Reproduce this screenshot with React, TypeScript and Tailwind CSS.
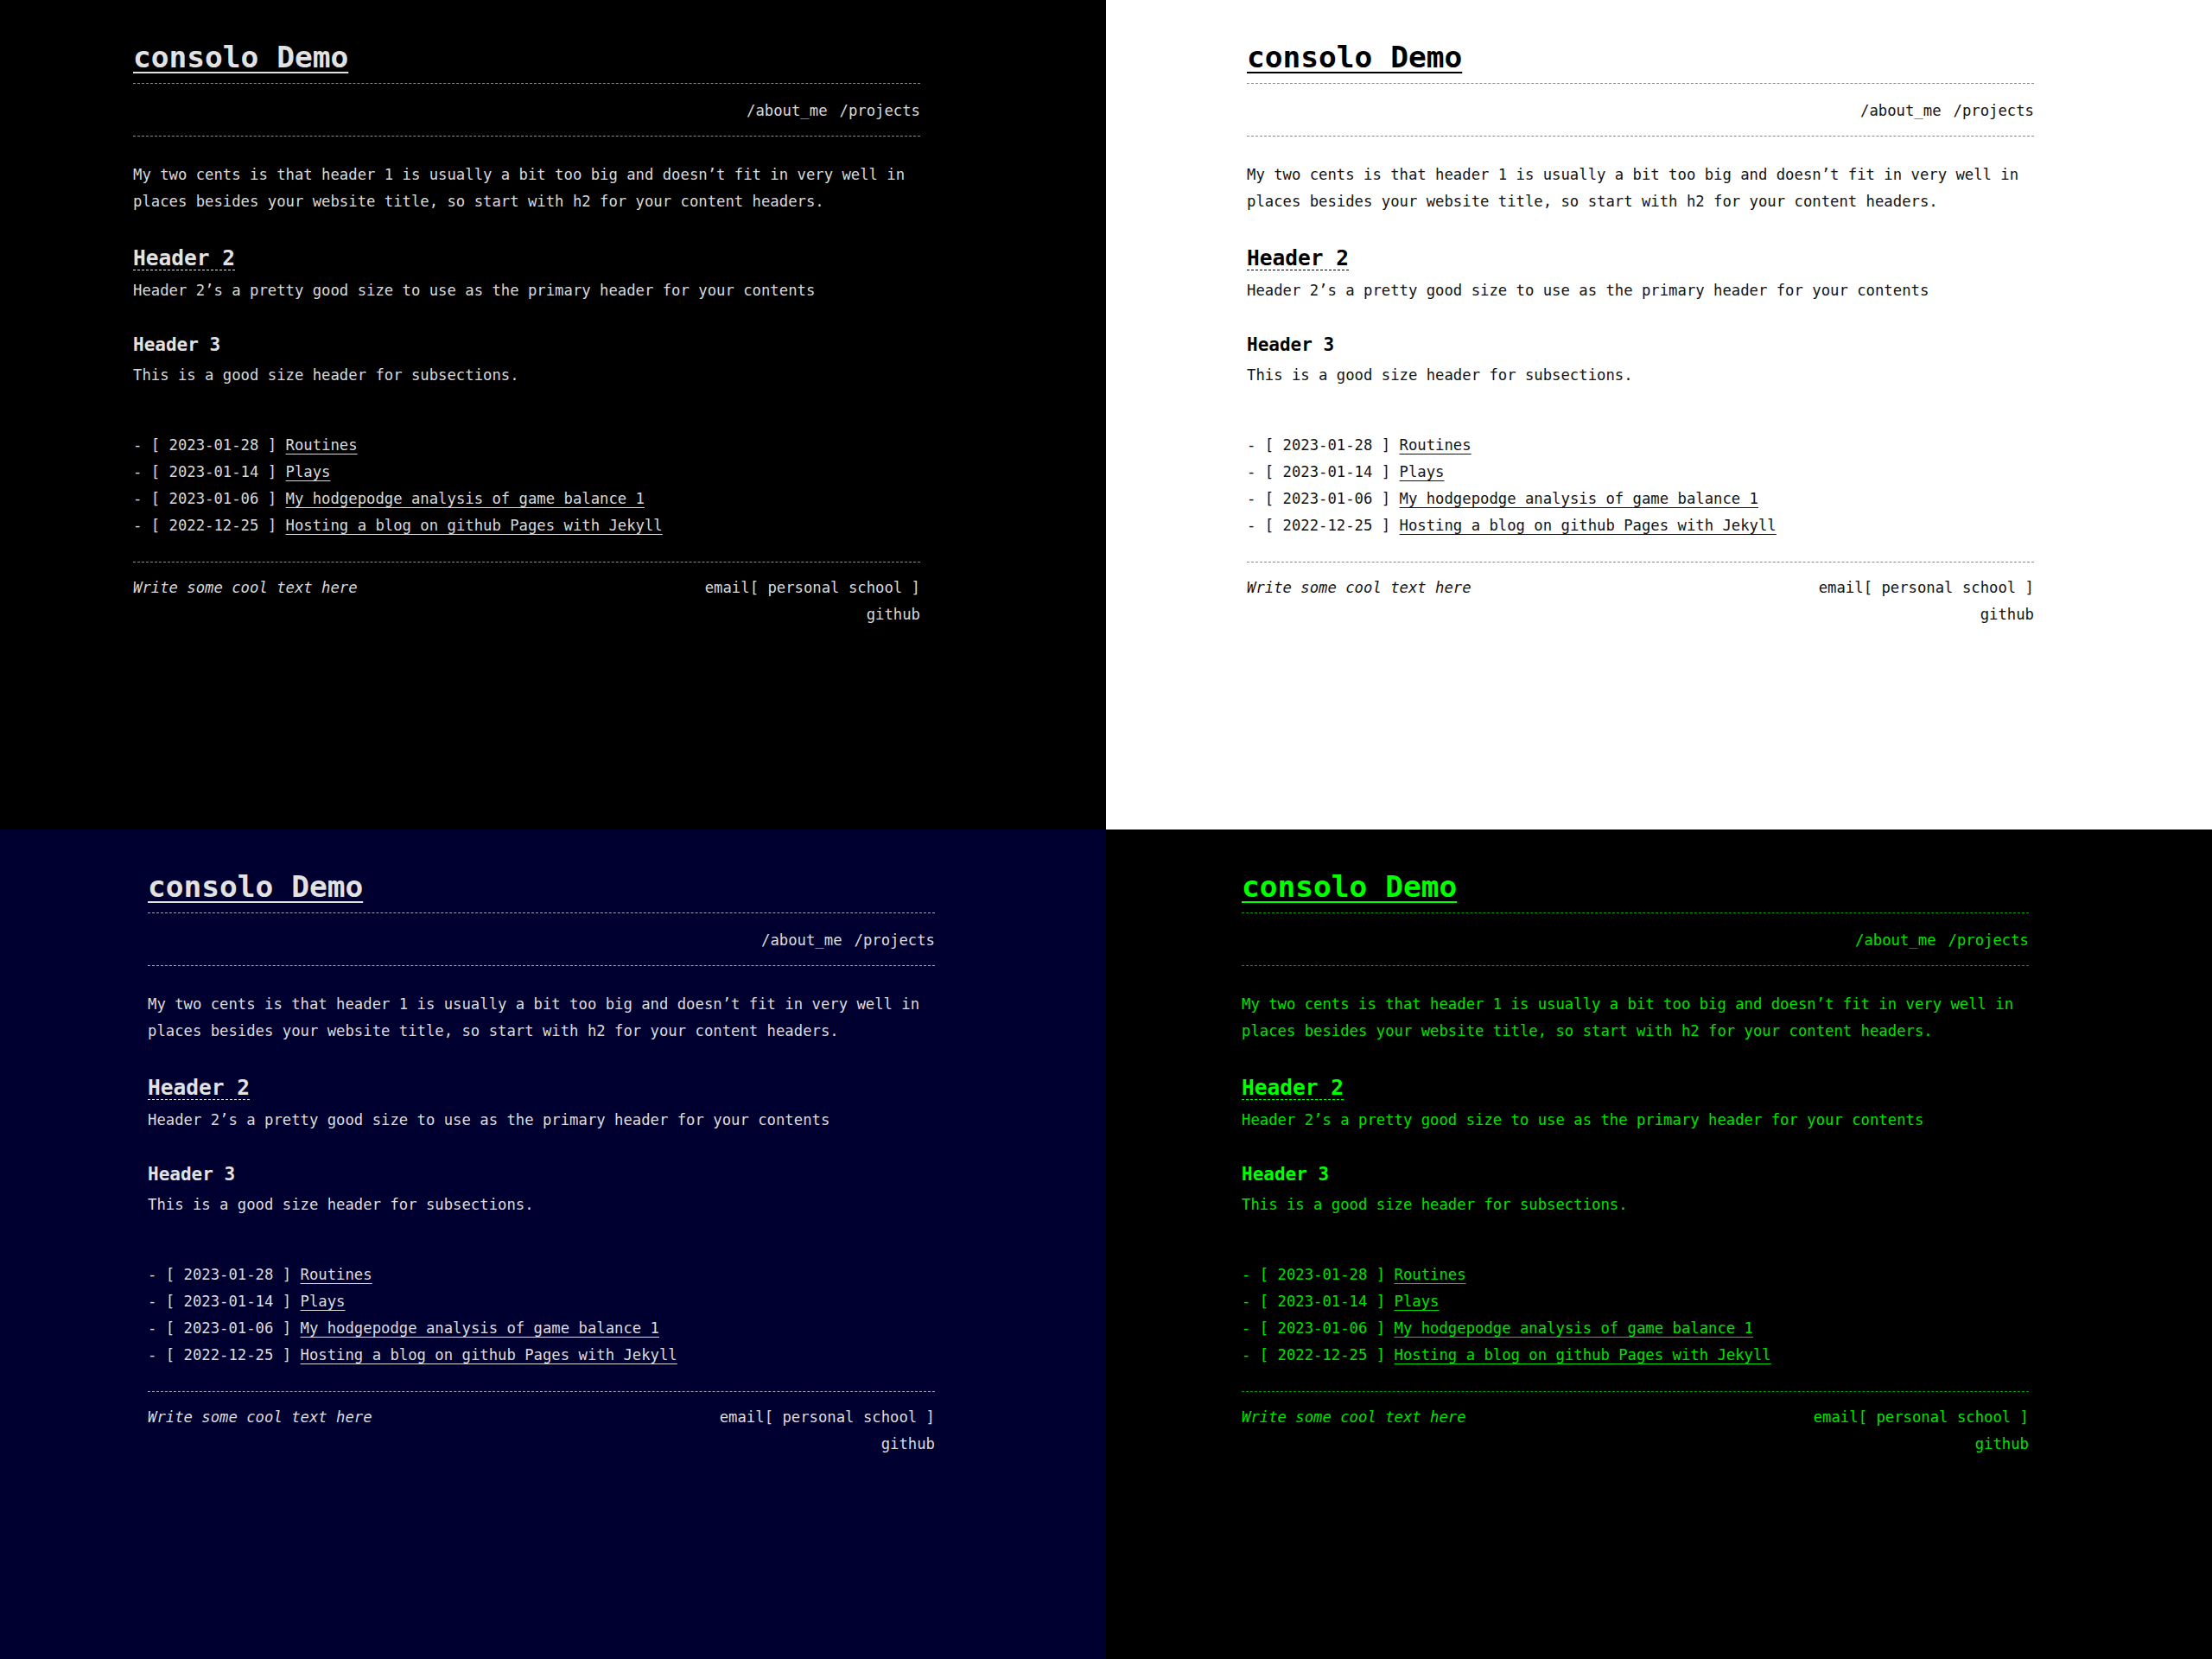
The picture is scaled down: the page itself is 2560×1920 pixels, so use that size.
import React from 'react';

type Theme = {
  bg: string;
  text: string;
  title: string;
  rule: string;
  pad: string;
};

const themes: Theme[] = [
  { bg: 'bg-black', text: 'text-[#d9d9d9]', title: 'text-[#e2e2e2]', rule: 'border-[#8a8a8a]', pad: 'pl-[154px]' },
  { bg: 'bg-white', text: 'text-[#141414]', title: 'text-black', rule: 'border-[#8a8a8a]', pad: 'pl-[163px]' },
  { bg: 'bg-[#000030]', text: 'text-[#dcdcdc]', title: 'text-[#e2e2e2]', rule: 'border-[#a0a0b8]', pad: 'pl-[171px]' },
  { bg: 'bg-black', text: 'text-[#00e000]', title: 'text-[#00ff00]', rule: 'border-[#00a000]', pad: 'pl-[157px]' },
];

const posts = [
  { date: '2023-01-28', title: 'Routines' },
  { date: '2023-01-14', title: 'Plays' },
  { date: '2023-01-06', title: 'My hodgepodge analysis of game balance 1' },
  { date: '2022-12-25', title: 'Hosting a blog on github Pages with Jekyll' },
];

const Panel = ({ t }: { t: Theme }) => (
  <div className={`h-[960px] overflow-hidden pt-[46px] ${t.bg} ${t.text} ${t.pad}`}>
    <div className="w-[911px] text-[17.25px] leading-[31px]">
      {/* Header */}
      <div className={`border-b border-dashed pb-[10px] ${t.rule}`}>
        <a className={`block w-fit text-[34.5px] leading-[40px] font-bold underline decoration-[2px] underline-offset-[5px] ${t.title}`}>
          consolo Demo
        </a>
      </div>
      <nav className={`flex justify-end gap-[14px] border-b border-dashed pt-[16px] pb-[13px] ${t.rule}`}>
        <a>/about_me</a>
        <a>/projects</a>
      </nav>

      {/* Content */}
      <p className="mt-[29px]">
        My two cents is that header 1 is usually a bit too big and doesn’t fit in very well in places besides your
        website title, so start with h2 for your content headers.
      </p>
      <h2 className={`mt-[34px] w-fit text-[24.5px] leading-[32px] font-bold underline decoration-dashed decoration-1 underline-offset-[5px] ${t.title}`}>
        Header 2
      </h2>
      <p className="mt-[6px]">Header 2’s a pretty good size to use as the primary header for your contents</p>
      <h3 className={`mt-[33px] text-[21px] leading-[28px] font-bold ${t.title}`}>Header 3</h3>
      <p className="mt-[6px]">This is a good size header for subsections.</p>

      <ul className="mt-[50px]">
        {posts.map((p) => (
          <li key={p.date} className="whitespace-pre">
            {'- [ ' + p.date + ' ] '}
            <a className="underline decoration-1 underline-offset-[4px]">{p.title}</a>
          </li>
        ))}
      </ul>

      {/* Footer */}
      <footer className={`mt-[26px] flex justify-between border-t border-dashed pt-[14px] ${t.rule}`}>
        <span className="italic">Write some cool text here</span>
        <div className="text-right">
          <div>
            email[ <a>personal</a> <a>school</a> ]
          </div>
          <a>github</a>
        </div>
      </footer>
    </div>
  </div>
);

export default function App() {
  return (
    <div className="grid w-[2560px] grid-cols-2 font-['DejaVu_Sans_Mono',monospace]">
      {themes.map((t, i) => (
        <Panel key={i} t={t} />
      ))}
    </div>
  );
}
